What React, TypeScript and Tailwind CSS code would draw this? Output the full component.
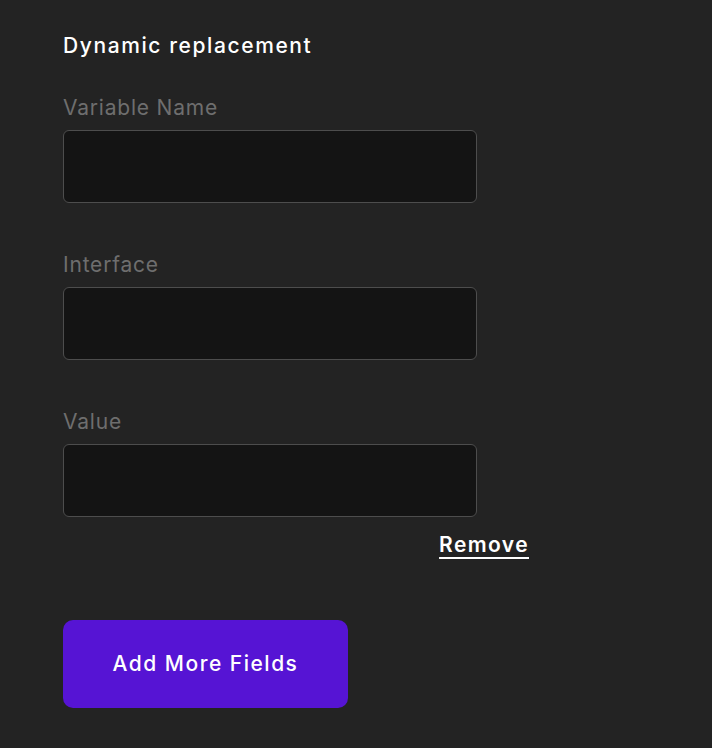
export default function App() {
  const fields = ["Variable Name", "Interface", "Value"];
  return (
    <div
      className="min-h-[748px] w-full bg-[#232323] pl-[63px] pt-[34px]"
      style={{ fontFamily: 'Inter, "Noto Sans", sans-serif' }}
    >
      <h2 className="text-[21px] leading-[24px] font-medium tracking-[1.6px] text-white">
        Dynamic replacement
      </h2>
      <div className="mt-[38px] flex flex-col gap-[50px] w-[414px]">
        {fields.map((f) => (
          <div key={f} className="flex flex-col">
            <label className="text-[21px] leading-[24px] tracking-[0.8px] text-[#6e6e6e] mb-[10px]">
              {f}
            </label>
            <input
              type="text"
              className="h-[73px] w-full rounded-[6px] border border-[#4d4d4d] bg-[#141414] outline-none"
            />
          </div>
        ))}
      </div>
      <div className="w-[466px] flex justify-end mt-[14px]">
        <button className="text-[21px] leading-[28px] font-semibold tracking-[1.4px] text-white underline underline-offset-[5px] decoration-2">
          Remove
        </button>
      </div>
      <button className="mt-[61px] h-[88px] w-[285px] rounded-[10px] bg-[#5614d4] text-[21px] font-medium tracking-[1.5px] text-white">
        Add More Fields
      </button>
    </div>
  );
}
